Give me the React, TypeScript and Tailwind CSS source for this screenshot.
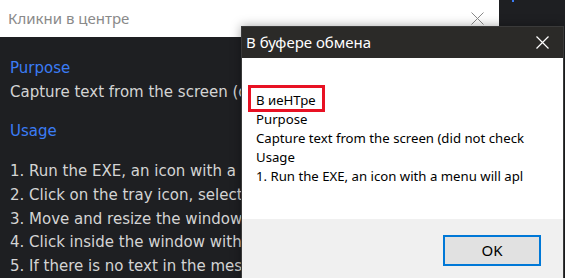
import React from "react";

export default function App() {
  const listItems = [
    "1. Run the EXE, an icon with a menu will appear in the tray",
    "2. Click on the tray icon, select the menu item",
    "3. Move and resize the window over the text",
    "4. Click inside the window with the mouse",
    "5. If there is no text in the message, try again",
  ];
  const dlgLines = [
    "Purpose",
    "Capture text from the screen (did not check",
    "Usage",
    "1. Run the EXE, an icon with a menu will apl",
  ];
  return (
    <div className="relative w-[565px] h-[278px] overflow-hidden bg-[#1e1f22]">
      {/* background window */}
      <div className="w-[499px] h-full flex flex-col">
        <div className="h-[37px] bg-white flex items-center justify-between pl-[8px] pr-[15px] shrink-0">
          <span className="text-[15px] text-[#8a8a8a] font-['Noto_Sans',sans-serif] leading-none">
            Кликни в центре
          </span>
          <svg width="13" height="13" viewBox="0 0 13 13" className="mb-[1px]">
            <path d="M0.5 0.5L12.5 12.5M12.5 0.5L0.5 12.5" stroke="#8a8a8a" strokeWidth="1" />
          </svg>
        </div>
        <div className="flex-1 bg-[#1e1f22] pl-[10px] pt-[19px] font-['DejaVu_Sans',sans-serif] text-[15px] leading-[24px] whitespace-nowrap overflow-hidden">
          <div className="text-[#3b7cf5]">Purpose</div>
          <div className="text-[#d4d4d4]">Capture text from the screen (did not check on all systems)</div>
          <div className="text-[#3b7cf5] mt-[15px]">Usage</div>
          <div className="mt-[17px] text-[#d4d4d4] leading-[23.75px]">
            {listItems.map((t) => (
              <div key={t}>{t}</div>
            ))}
          </div>
        </div>
      </div>
      <div className="absolute left-[512px] top-0 w-[2px] h-[2px] bg-[#3b7cf5]" />

      {/* message dialog */}
      <div className="absolute left-[241px] top-[26px] w-[323px] h-[260px] border border-[#3a3a3a] bg-white flex flex-col shadow-[0_0_10px_rgba(0,0,0,0.35)]">
        <div className="h-[31px] bg-[#2b2a28] flex items-center justify-between pl-[4px] pr-[14px] shrink-0">
          <span className="text-[15px] text-white font-['Noto_Sans',sans-serif] leading-none">
            В буфере обмена
          </span>
          <svg width="13" height="13" viewBox="0 0 13 13">
            <path d="M0.5 0.5L12.5 12.5M12.5 0.5L0.5 12.5" stroke="#ffffff" strokeWidth="1.2" />
          </svg>
        </div>
        <div className="relative h-[161px] bg-white pl-[14px] pt-[33px] font-['Noto_Sans',sans-serif] text-[13.2px] leading-[19px] text-black whitespace-nowrap shrink-0">
          <div className="absolute left-[6px] top-[27px] w-[77px] h-[27px] border-[3px] border-[#e81123]" />
          <div className="relative">В иеНТре</div>
          {dlgLines.map((t) => (
            <div key={t} className="relative">{t}</div>
          ))}
        </div>
        <div className="flex-1 bg-[#f0f0f0] flex justify-end items-start pt-[16px] pr-[22px]">
          <button className="w-[98px] h-[31px] border-2 border-[#0078d7] bg-[#e1e1e1] text-[15px] text-black font-['Noto_Sans',sans-serif] leading-none flex items-center justify-center">
            OK
          </button>
        </div>
      </div>
    </div>
  );
}
